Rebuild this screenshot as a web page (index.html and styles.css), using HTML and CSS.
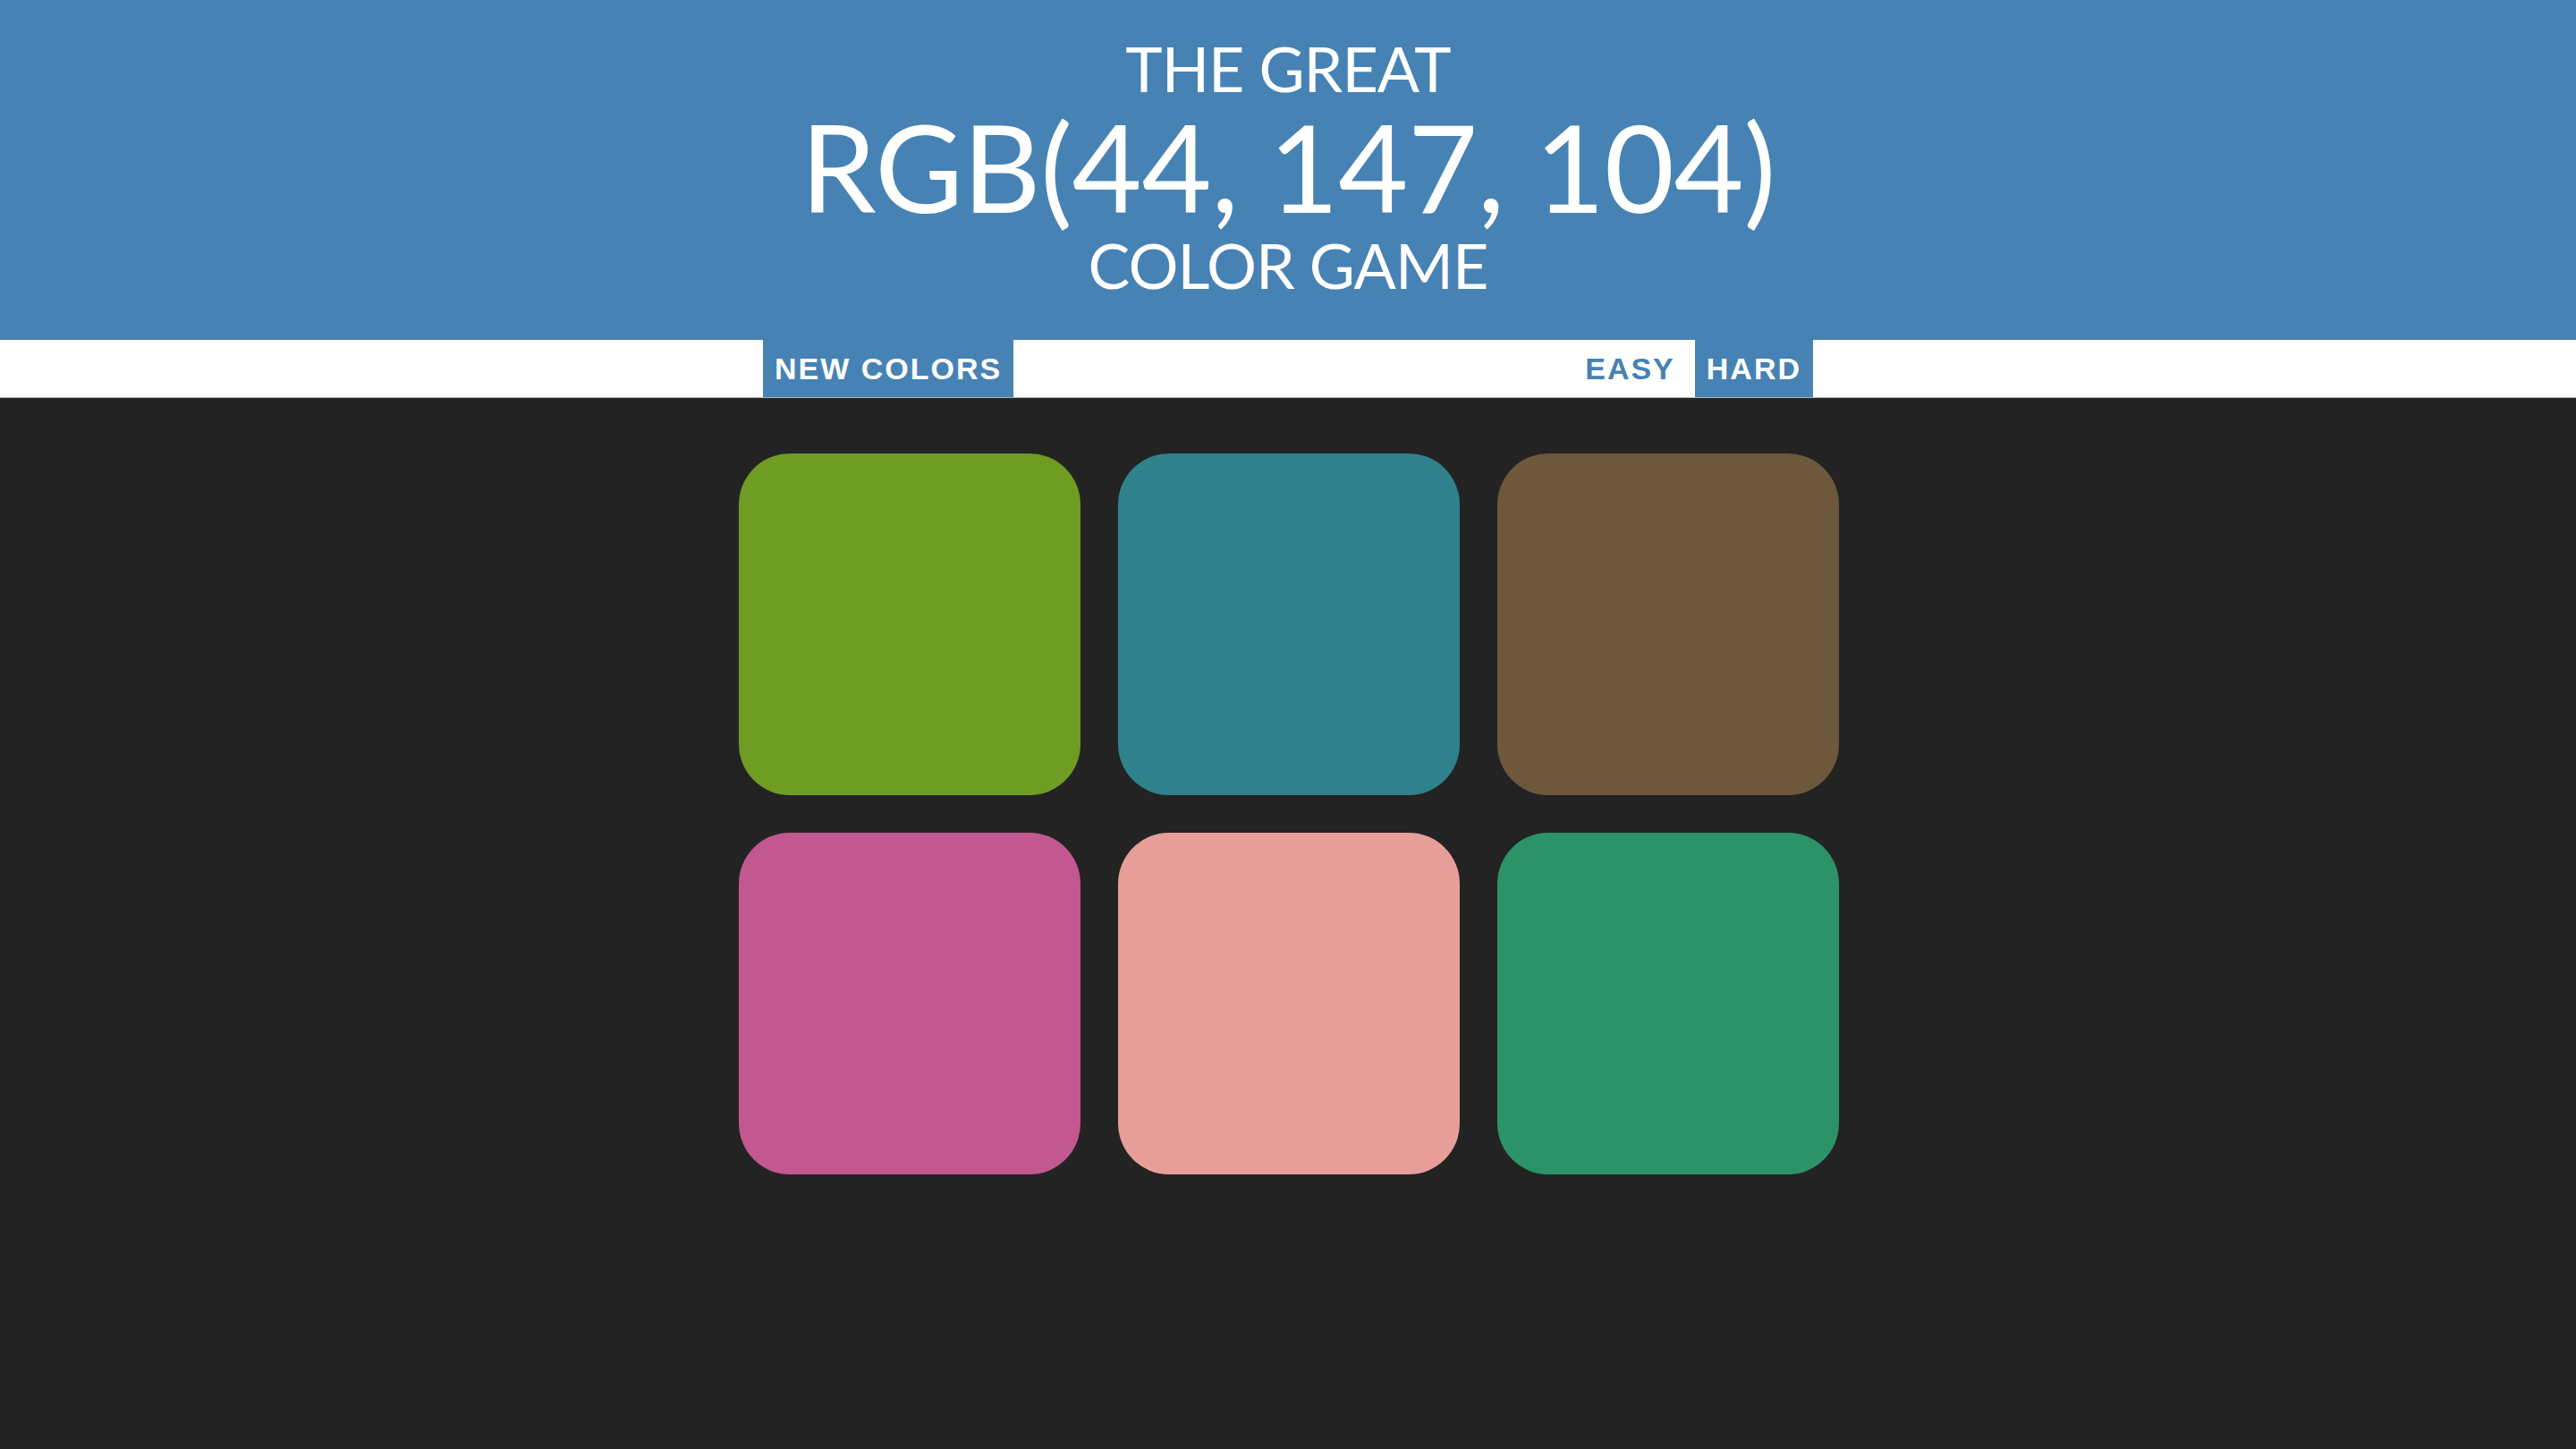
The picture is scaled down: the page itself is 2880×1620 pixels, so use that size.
FILE: index.html
```html
<!DOCTYPE html>
<html lang="en">
<head>
<meta charset="utf-8">
<title>Color Game</title>
<link rel="stylesheet" href="styles.css">
</head>
<body>
<h1 class="title">
  <span class="line small">The Great</span>
  <span class="line big">RGB(44, 147, 104)</span>
  <span class="line small">Color Game</span>
</h1>
<div class="stripe">
  <button class="btn btn-reset">New Colors</button>
  <span class="message"></span>
  <button class="btn">Easy</button>
  <button class="btn selected">Hard</button>
</div>
<div class="board">
  <div class="square sq1"></div>
  <div class="square sq2"></div>
  <div class="square sq3"></div>
  <div class="square sq4"></div>
  <div class="square sq5"></div>
  <div class="square sq6"></div>
</div>
</body>
</html>
```
FILE: styles.css
```css
html, body {
  margin: 0;
  padding: 0;
}
body {
  background: #232323;
  font-family: "Lato", "Liberation Sans", sans-serif;
  min-height: 1620px;
}
.title {
  margin: 0;
  height: 380px;
  box-sizing: border-box;
  padding-top: 39px;
  background: #4682b4;
  color: #ffffff;
  font-weight: normal;
  text-transform: uppercase;
  text-align: center;
  display: flex;
  flex-direction: column;
  align-items: center;
}
.line {
  display: block;
  white-space: nowrap;
}
.small {
  font-size: 70px;
  line-height: 75px;
  letter-spacing: -1px;
}
.big {
  font-size: 135px;
  line-height: 145px;
  letter-spacing: -0.5px;
}
.stripe {
  background: #ffffff;
  height: 64px;
  border-bottom: 1px solid #b4b4b4;
  display: flex;
  justify-content: center;
  align-items: stretch;
}
.btn {
  border: none;
  background: none;
  margin: 0;
  padding: 0 13px;
  font-family: "Liberation Sans", Arial, sans-serif;
  font-weight: 700;
  font-size: 34px;
  letter-spacing: 2px;
  text-transform: uppercase;
  color: #4682b4;
  height: 64px;
  cursor: pointer;
}
.btn-reset {
  background: #4682b4;
  color: #ffffff;
}
.selected {
  background: #4682b4;
  color: #ffffff;
  margin-left: 9px;
}
.message {
  width: 626px;
}
.board {
  width: 1230px;
  margin: 62px auto 0;
  padding-left: 2px;
  display: grid;
  grid-template-columns: repeat(3, 382px);
  gap: 42px;
}
.square {
  width: 382px;
  height: 382px;
  border-radius: 57px;
}
.sq1 { background: #6f9c23; }
.sq2 { background: #2f828c; }
.sq3 { background: #6e583b; }
.sq4 { background: #c2588f; }
.sq5 { background: #e89e98; }
.sq6 { background: #2c9368; }
```
